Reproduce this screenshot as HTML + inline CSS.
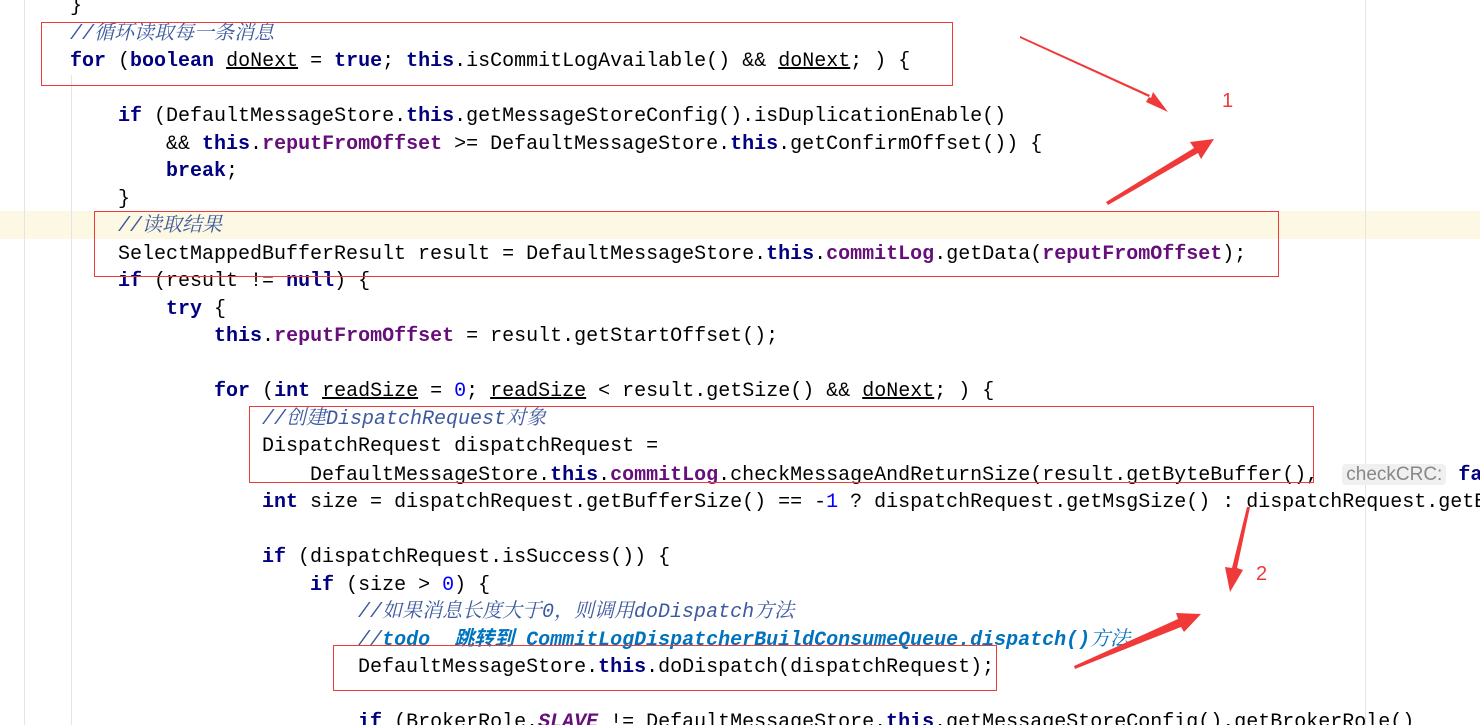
<!DOCTYPE html>
<html><head><meta charset="utf-8"><style>
html,body{margin:0;width:1480px;height:725px;overflow:hidden;}
body{background:#fff;position:relative;font-family:"Liberation Mono","Noto Sans CJK SC",monospace;}
.hl{position:absolute;left:0;top:211px;width:1480px;height:28px;background:#fdf8e4;}
.code{position:absolute;left:70px;top:-7px;width:1410px;height:732px;overflow:hidden;font-size:20px;line-height:27.5px;white-space:pre;color:#000;}
.k{color:#000080;font-weight:bold}
.f{color:#660e7a;font-weight:bold}
.c{color:#3d5a9e;font-style:italic;font-family:"Liberation Mono","Noto Serif CJK SC",monospace}
.t{color:#0073bf;font-style:italic;font-weight:bold}
.n{color:#0000ff}
.u{text-decoration:underline}
.hint{background:#f0f0f0;color:#888;font-family:"Liberation Sans",sans-serif;font-size:19px;border-radius:4px;padding:0 4px}
.box{position:absolute;border:1.3px solid #f03a3a}
.g{position:absolute;top:0;width:1px;height:725px;background:#e4e4e4}
</style></head><body>
<div class="hl"></div>
<div class="g" style="left:24px"></div>
<div class="g" style="left:71px;top:75px;height:650px"></div>
<div class="g" style="left:1365px"></div>
<div class="code">}
<span class="c">//循环读取每一条消息</span>
<span class="k">for</span> (<span class="k">boolean</span> <span class="u">doNext</span> = <span class="k">true</span>; <span class="k">this</span>.isCommitLogAvailable() &amp;&amp; <span class="u">doNext</span>; ) {

    <span class="k">if</span> (DefaultMessageStore.<span class="k">this</span>.getMessageStoreConfig().isDuplicationEnable()
        &amp;&amp; <span class="k">this</span>.<span class="f">reputFromOffset</span> &gt;= DefaultMessageStore.<span class="k">this</span>.getConfirmOffset()) {
        <span class="k">break</span>;
    }
    <span class="c">//读取结果</span>
    SelectMappedBufferResult result = DefaultMessageStore.<span class="k">this</span>.<span class="f">commitLog</span>.getData(<span class="f">reputFromOffset</span>);
    <span class="k">if</span> (result != <span class="k">null</span>) {
        <span class="k">try</span> {
            <span class="k">this</span>.<span class="f">reputFromOffset</span> = result.getStartOffset();

            <span class="k">for</span> (<span class="k">int</span> <span class="u">readSize</span> = <span class="n">0</span>; <span class="u">readSize</span> &lt; result.getSize() &amp;&amp; <span class="u">doNext</span>; ) {
                <span class="c">//创建DispatchRequest对象</span>
                DispatchRequest dispatchRequest =
                    DefaultMessageStore.<span class="k">this</span>.<span class="f">commitLog</span>.checkMessageAndReturnSize(result.getByteBuffer(),  <span class="hint">checkCRC:</span> <span class="k">false</span>
                <span class="k">int</span> size = dispatchRequest.getBufferSize() == -<span class="n">1</span> ? dispatchRequest.getMsgSize() : dispatchRequest.getBufferSize();

                <span class="k">if</span> (dispatchRequest.isSuccess()) {
                    <span class="k">if</span> (size &gt; <span class="n">0</span>) {
                        <span class="c">//如果消息长度大于0，则调用doDispatch方法</span>
                        <span class="c">//</span><span class="t">todo  跳转到 CommitLogDispatcherBuildConsumeQueue.dispatch()</span><span class="c" style="color:#0073bf">方法</span>
                        DefaultMessageStore.<span class="k">this</span>.doDispatch(dispatchRequest);

                        <span class="k">if</span> (BrokerRole.<span class="f" style="font-style:italic">SLAVE</span> != DefaultMessageStore.<span class="k">this</span>.getMessageStoreConfig().getBrokerRole()</div>
<div class="box" style="left:41px;top:22px;width:910px;height:62px"></div>
<div class="box" style="left:94px;top:211px;width:1183px;height:64px"></div>
<div class="box" style="left:249px;top:406px;width:1063px;height:75px"></div>
<div class="box" style="left:333px;top:645px;width:662px;height:44px"></div>
<svg style="position:absolute;left:0;top:0" width="1480" height="725">
<g fill="#f03a3a">
<polygon points="1020,36 1150,95 1146,102 1168,112 1153,92 1151,98 1020,38"/>
<polygon points="1106,202 1194,148 1190,142 1214,139 1201,159 1198,153 1108,205"/>
<polygon points="1250,507 1237,568 1243,570 1230,592 1225,567 1232,568 1247,507"/>
<polygon points="1075,669 1181,627 1184,632 1201,614 1176,613 1178,619 1074,666"/>
</g>
<text x="1222" y="107" fill="#f03a3a" font-family="Liberation Sans" font-size="20">1</text>
<text x="1256" y="580" fill="#f03a3a" font-family="Liberation Sans" font-size="20">2</text>
</svg>
</body></html>
